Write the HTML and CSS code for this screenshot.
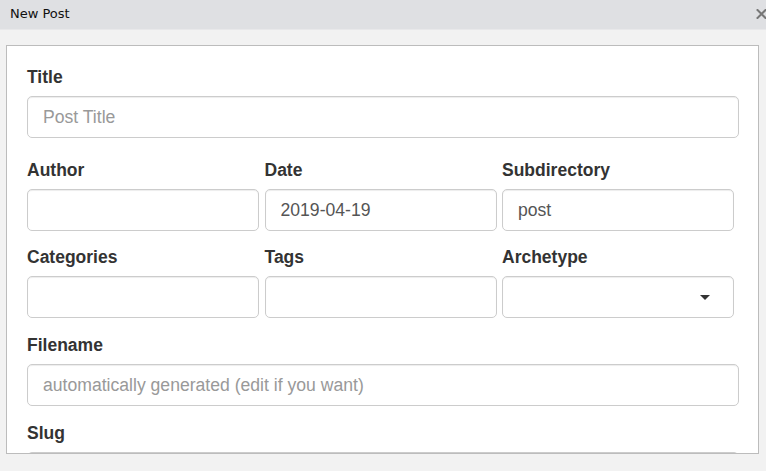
FILE: index.html
```html
<!DOCTYPE html>
<html lang="en">
<head>
<meta charset="utf-8">
<title>New Post</title>
<link rel="stylesheet" href="styles.css">
</head>
<body>
<div class="window">
  <header class="titlebar">
    <span class="title">New Post</span>
    <svg class="close" width="11" height="10" viewBox="0 0 11 10" aria-hidden="true">
      <path d="M1.5 1 L9.5 9 M9.5 1 L1.5 9" stroke="#777" stroke-width="2" stroke-linecap="square" fill="none"/>
    </svg>
  </header>
  <main class="panel">
    <div class="group group-title">
      <label class="label" for="title">Title</label>
      <input class="control" id="title" type="text" placeholder="Post Title">
    </div>
    <div class="row row-first">
      <div class="group">
        <label class="label" for="author">Author</label>
        <input class="control" id="author" type="text">
      </div>
      <div class="group">
        <label class="label" for="date">Date</label>
        <input class="control" id="date" type="text" value="2019-04-19">
      </div>
      <div class="group">
        <label class="label" for="subdir">Subdirectory</label>
        <input class="control" id="subdir" type="text" value="post">
      </div>
    </div>
    <div class="row">
      <div class="group">
        <label class="label" for="cats">Categories</label>
        <input class="control" id="cats" type="text">
      </div>
      <div class="group">
        <label class="label" for="tags">Tags</label>
        <input class="control" id="tags" type="text">
      </div>
      <div class="group">
        <span class="label">Archetype</span>
        <div class="control select"><span class="caret"></span></div>
      </div>
    </div>
    <div class="group">
      <label class="label" for="filename">Filename</label>
      <input class="control" id="filename" type="text" placeholder="automatically generated (edit if you want)">
    </div>
    <div class="group">
      <label class="label" for="slug">Slug</label>
      <input class="control" id="slug" type="text">
    </div>
  </main>
</div>
</body>
</html>
```

FILE: styles.css
```css
* {
  box-sizing: border-box;
}

html, body {
  margin: 0;
  padding: 0;
}

body {
  width: 766px;
  height: 471px;
  overflow: hidden;
  background: #f2f2f2;
  font-family: "Liberation Sans", Arial, sans-serif;
}

.window {
  display: flex;
  flex-direction: column;
  height: 471px;
}

.titlebar {
  height: 30px;
  flex: none;
  display: flex;
  align-items: flex-start;
  justify-content: space-between;
  background: #dfe0e3;
  border-bottom: 1px solid #e8e8ea;
  padding-left: 10px;
}

.title {
  font-family: "DejaVu Sans", sans-serif;
  font-size: 13px;
  line-height: 27px;
  color: #111;
}

.close {
  margin-top: 9px;
  margin-right: -1px;
  display: block;
}

.panel {
  margin: 15px 7px 0 6px;
  height: 409px;
  flex: none;
  background: #fff;
  border: 1px solid #bcbcbc;
  padding: 21px 19px 0 20px;
  overflow: hidden;
}

.group {
  margin-bottom: 17px;
}

.group-title {
  margin-bottom: 22px;
}

.row {
  display: grid;
  grid-template-columns: 232px 232px 232px;
  column-gap: 5.5px;
  margin-bottom: 17px;
}

.row-first {
  margin-bottom: 16px;
}

.row .group {
  margin-bottom: 0;
}

.label {
  display: block;
  font-weight: bold;
  font-size: 17.5px;
  line-height: 21px;
  color: #333;
  margin-bottom: 8px;
}

.control {
  display: block;
  width: 100%;
  height: 42px;
  margin: 0;
  padding: 0 15px;
  border: 1px solid #ccc;
  border-radius: 5px;
  background: #fff;
  box-shadow: inset 0 1px 1px rgba(0, 0, 0, 0.075);
  font-family: "Liberation Sans", Arial, sans-serif;
  font-size: 17.6px;
  color: #555;
  outline: none;
}

.control::placeholder {
  color: #999;
  opacity: 1;
}

.select {
  display: flex;
  align-items: center;
  justify-content: flex-end;
  padding-right: 23px;
}

.caret {
  width: 0;
  height: 0;
  border-left: 5px solid transparent;
  border-right: 5px solid transparent;
  border-top: 5px solid #333;
}
```
